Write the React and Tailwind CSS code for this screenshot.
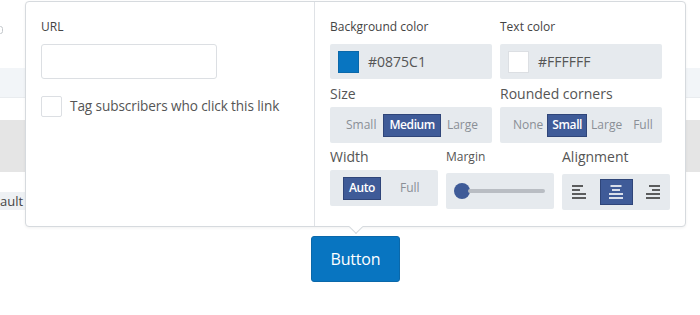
import React from 'react';

const font = { fontFamily: '"Open Sans", "Liberation Sans", sans-serif' };

function AlignIcon({ align, active }) {
  const c = active ? '#ffffff' : '#3a3a3a';
  const rows = [
    { y: 2, w: 11 },
    { y: 6, w: 8 },
    { y: 10, w: 14 },
    { y: 14, w: 14 },
  ];
  return (
    <svg width="16" height="16" viewBox="0 0 16 16">
      {rows.map((r, i) => {
        const x = align === 'left' ? 1 : align === 'right' ? 15 - r.w : (16 - r.w) / 2;
        return <rect key={i} x={x} y={r.y - 0.8} width={r.w} height="1.6" fill={c} />;
      })}
    </svg>
  );
}

function Seg({ children, active, pad = 'px-[5px]' }) {
  return (
    <span
      className={
        'flex h-[23px] items-center text-[12px] ' + pad + ' ' +
        (active
          ? 'bg-[#3f5b98] border border-[#2f4579] font-semibold text-white tracking-[-0.4px]'
          : 'text-[#8a8f96]')
      }
    >
      {children}
    </span>
  );
}

export default function App() {
  return (
    <div className="relative w-[700px] h-[315px] overflow-hidden bg-white" style={font}>
      {/* page underneath */}
      <div className="flex flex-col">
        <div className="h-[68px] pt-[26px]">
          <span className="block w-[5px] h-[8px] -ml-[2px] rounded-full border border-[#c4c8cc]" />
        </div>
        <div className="h-[30px] bg-[#f2f5f8] border-b border-[#e9ecef]" />
        <div className="mt-[22px] h-[52px] bg-[#e5e5e5]" />
        <div className="mt-[20px] h-[18px] flex">
          <span className="px-[2px] bg-[#eef1f4] text-[13px] leading-[18px] text-[#444] -ml-[2px]">ault default</span>
        </div>
        <div className="mt-[26px] flex justify-center pl-[11px]">
          <button className="w-[89px] h-[46px] rounded-[3px] bg-[#0875c1] border border-[#0a68aa] text-white text-[16px] tracking-[-0.2px]">
            Button
          </button>
        </div>
      </div>

      {/* popover */}
      <div className="absolute left-[25px] top-[1px] w-[661px] h-[226px] flex rounded-[4px] border border-[#d6dade] bg-white shadow-[0_1px_3px_rgba(0,0,0,0.06)]">
        <div className="w-[289px] border-r border-[#dfe2e6] pl-[15px] pt-[17px]">
          <div className="text-[12px] leading-[16px] text-[#444]">URL</div>
          <div className="mt-[9px] w-[176px] h-[35px] rounded-[3px] border border-[#dcdfe3] bg-white" />
          <div className="mt-[17px] flex items-center gap-[8px]">
            <span className="w-[21px] h-[21px] rounded-[2px] border border-[#dcdfe3] bg-white" />
            <span className="text-[13.6px] text-[#555] tracking-[-0.1px]">Tag subscribers who click this link</span>
          </div>
        </div>

        <div className="flex-1 pl-[15px] pt-[17px]">
          <div className="grid grid-cols-[162px_162px] gap-x-[8px]">
            <div className="text-[12px] leading-[16px] text-[#444]">Background color</div>
            <div className="text-[12px] leading-[16px] text-[#444]">Text color</div>
            <div className="mt-[9px] h-[35px] bg-[#e6eaee] rounded-[2px] flex items-center pl-[8px] gap-[9px]">
              <span className="w-[21px] h-[22px] bg-[#0875c1] border border-[#0a68aa]" />
              <span className="text-[14px] text-[#555]">#0875C1</span>
            </div>
            <div className="mt-[9px] h-[35px] bg-[#e6eaee] rounded-[2px] flex items-center pl-[8px] gap-[9px]">
              <span className="w-[21px] h-[22px] bg-white border border-[#dcdfe3]" />
              <span className="text-[14px] text-[#555]">#FFFFFF</span>
            </div>

            <div className="mt-[5px] text-[14px] leading-[20px] text-[#555]">Size</div>
            <div className="mt-[5px] text-[14px] leading-[20px] text-[#555]">Rounded corners</div>
            <div className="mt-[3px] h-[36px] bg-[#e6eaee] rounded-[2px] flex items-center pl-[11px] gap-[2px]">
              <Seg>Small</Seg>
              <Seg active>Medium</Seg>
              <Seg pad="px-[4px]">Large</Seg>
            </div>
            <div className="mt-[3px] h-[36px] bg-[#e6eaee] rounded-[2px] flex items-center pl-[9px]">
              <Seg pad="px-[4px]">None</Seg>
              <Seg active pad="px-[4px]">Small</Seg>
              <Seg pad="px-[4px]">Large</Seg>
              <span className="ml-[3px]"><Seg pad="px-[4px]">Full</Seg></span>
            </div>
          </div>

          <div className="mt-[3px] flex gap-[8px]">
            <div className="w-[108px]">
              <div className="pt-[1px] text-[14px] leading-[20px] text-[#555]">Width</div>
              <div className="mt-[3px] h-[36px] bg-[#e6eaee] rounded-[2px] flex items-center pl-[13px]">
                <Seg active>Auto</Seg>
                <span className="ml-[14px]"><Seg>Full</Seg></span>
              </div>
            </div>
            <div className="w-[108px]">
              <div className="pt-[2px] text-[12px] leading-[18px] text-[#555]">Margin</div>
              <div className="mt-[7px] h-[36px] bg-[#e6eaee] rounded-[2px] flex items-center pl-[8px] pr-[9px]">
                <span className="w-[16px] h-[16px] rounded-full bg-[#3f5b98] shrink-0" />
                <span className="flex-1 h-[4px] -ml-[2px] rounded-full bg-[#b9bdc3]" />
              </div>
            </div>
            <div className="w-[108px]">
              <div className="pt-[1px] text-[14px] leading-[20px] text-[#555]">Alignment</div>
              <div className="mt-[7px] h-[36px] bg-[#e6eaee] rounded-[2px] flex items-center justify-center gap-[4px]">
                <span className="w-[33px] h-[26px] flex items-center justify-center"><AlignIcon align="left" /></span>
                <span className="w-[33px] h-[26px] flex items-center justify-center bg-[#3f5b98] border border-[#2f4579]"><AlignIcon align="center" active /></span>
                <span className="w-[33px] h-[26px] flex items-center justify-center"><AlignIcon align="right" /></span>
              </div>
            </div>
          </div>
        </div>

        {/* arrow */}
        <span className="absolute left-[325px] -bottom-[6px] w-[10px] h-[10px] rotate-45 bg-white border-r border-b border-[#d6dade]" />
      </div>
    </div>
  );
}
